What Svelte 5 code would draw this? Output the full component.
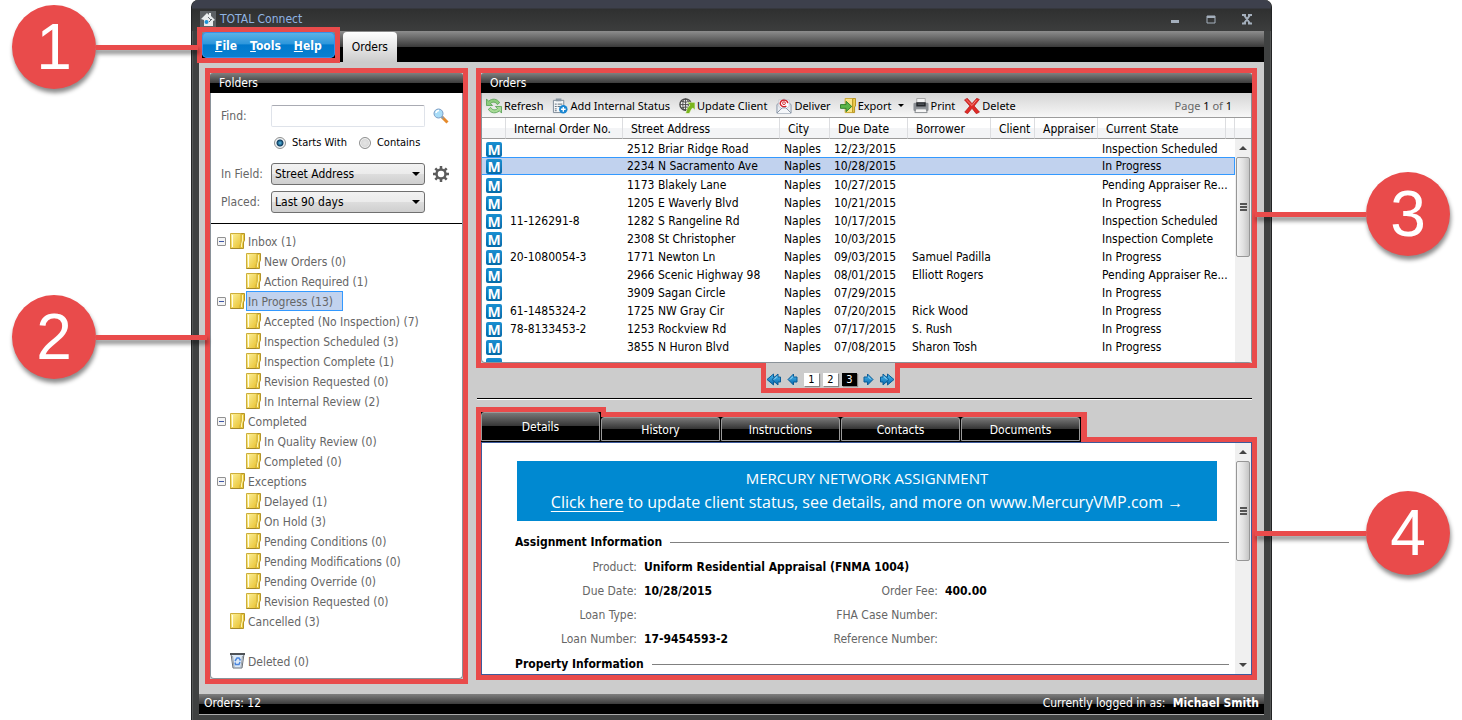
<script>
	let field = 'Street Address';
	let placed = 'Last 90 days';
	let match = 'starts';
	let find = '';
	let selectedFolder = 'In Progress (13)';
	let selectedOrder = 1;
	let currentPage = 3;
	let currentTab = 'Details';

	const folders = [
		{ name: 'Inbox (1)', children: ['New Orders (0)', 'Action Required (1)'] },
		{
			name: 'In Progress (13)',
			children: [
				'Accepted (No Inspection) (7)',
				'Inspection Scheduled (3)',
				'Inspection Complete (1)',
				'Revision Requested (0)',
				'In Internal Review (2)'
			]
		},
		{ name: 'Completed', children: ['In Quality Review (0)', 'Completed (0)'] },
		{
			name: 'Exceptions',
			children: [
				'Delayed (1)',
				'On Hold (3)',
				'Pending Conditions (0)',
				'Pending Modifications (0)',
				'Pending Override (0)',
				'Revision Requested (0)'
			]
		},
		{ name: 'Cancelled (3)', children: [] }
	];

	const tools = ['Refresh', 'Add Internal Status', 'Update Client', 'Deliver', 'Export', 'Print', 'Delete'];

	const columns = ['', 'Internal Order No.', 'Street Address', 'City', 'Due Date', 'Borrower', 'Client', 'Appraiser', 'Current State', ''];

	const orders = [
		{ no: '', street: '2512 Briar Ridge Road', due: '12/23/2015', borrower: '', state: 'Inspection Scheduled' },
		{ no: '', street: '2234 N Sacramento Ave', due: '10/28/2015', borrower: '', state: 'In Progress' },
		{ no: '', street: '1173 Blakely Lane', due: '10/27/2015', borrower: '', state: 'Pending Appraiser Re...' },
		{ no: '', street: '1205 E Waverly Blvd', due: '10/21/2015', borrower: '', state: 'In Progress' },
		{ no: '11-126291-8', street: '1282 S Rangeline Rd', due: '10/17/2015', borrower: '', state: 'Inspection Scheduled' },
		{ no: '', street: '2308 St Christopher', due: '10/03/2015', borrower: '', state: 'Inspection Complete' },
		{ no: '20-1080054-3', street: '1771 Newton Ln', due: '09/03/2015', borrower: 'Samuel Padilla', state: 'In Progress' },
		{ no: '', street: '2966 Scenic Highway 98', due: '08/01/2015', borrower: 'Elliott Rogers', state: 'Pending Appraiser Re...' },
		{ no: '', street: '3909 Sagan Circle', due: '07/29/2015', borrower: '', state: 'In Progress' },
		{ no: '61-1485324-2', street: '1725 NW Gray Cir', due: '07/20/2015', borrower: 'Rick Wood', state: 'In Progress' },
		{ no: '78-8133453-2', street: '1253 Rockview Rd', due: '07/17/2015', borrower: 'S. Rush', state: 'In Progress' },
		{ no: '', street: '3855 N Huron Blvd', due: '07/08/2015', borrower: 'Sharon Tosh', state: 'In Progress' }
	];

	const tabs = ['Details', 'History', 'Instructions', 'Contacts', 'Documents'];
</script>

{#snippet folderIcon()}
	<svg class="folder-icon" width="16" height="16" viewBox="0 0 16 16" aria-hidden="true">
		<defs>
			<linearGradient id="gold" x1="0" y1="0" x2="1" y2="1">
				<stop offset="0" stop-color="#fdf3a0" />
				<stop offset="1" stop-color="#e8c02c" />
			</linearGradient>
		</defs>
		<path d="M9 .5h5.500v7l-1 1.500v6.500H9z" fill="#ecca3c" stroke="#b3942a" />
		<path d="M.5.5h10.500v10l-1 1.500v3.500H.5z" fill="url(#gold)" stroke="#cdae3a" />
		<path d="M2.500 2v12" stroke="#fffde6" />
		<path d="M.5 15.500h10" stroke="#a3872a" />
		<path d="M12.500 2v6l-1 3v3" fill="none" stroke="#fdf3b0" />
	</svg>
{/snippet}

{#snippet scrollbar()}
	<div class="scrollbar" aria-hidden="true">
		<i class="up"></i>
		<div class="thumb"><i></i><i></i><i></i></div>
		<i class="down"></i>
	</div>
{/snippet}

{#snippet arrow(double, flip)}
	<svg class:flip width="15" height="13" viewBox="0 0 15 13" aria-hidden="true">
		<defs>
			<linearGradient id="blue" x1="0" y1="0" x2="0" y2="1">
				<stop offset="0" stop-color="#4fbdf0" />
				<stop offset="1" stop-color="#0464ad" />
			</linearGradient>
		</defs>
		{#if double}
			<path d="M5 4h2.500V1l6.500 5.500L7.500 12V9H5z" fill="url(#blue)" stroke="#0b5c97" />
			<path d="M.5 4H3V1l6 5.500L3 12V9H.5z" fill="url(#blue)" stroke="#0b5c97" />
			<path d="M4 3.500l3 3" stroke="#a9e0fa" />
		{:else}
			<path d="M3 4h3.500V1l5.500 5.500L6.500 12V9H3z" fill="url(#blue)" stroke="#0b5c97" />
			<path d="M7 3.500l3 3" stroke="#a9e0fa" />
		{/if}
	</svg>
{/snippet}

{#snippet toolIcon(name)}
	<svg width="16" height="16" viewBox="0 0 17 17" aria-hidden="true">
		{#if name === 'Refresh'}
			<path d="M.5 1v7h6.500L4.800 5.800C7 3.600 10.500 4 12 7l2.500-2C12 .6 6.500 0 2.800 3.400z" fill="#8ccb7c" stroke="#4c9a48" stroke-width=".8" />
			<path d="M16.500 16V9H10l2.200 2.200C10 13.400 6.500 13 5 10l-2.500 2c2.500 4.400 8 5 11.700 1.600z" fill="#a9dc98" stroke="#4c9a48" stroke-width=".8" />
		{:else if name === 'Add Internal Status'}
			<path d="M1.500 2.500h11v13h-11z" fill="#f5f7f9" stroke="#7a8794" />
			<path d="M4 .5h6v3H4z" fill="#8997a3" />
			<path d="M3 6.500h2M6 6.500h5M3 9h2M6 9h3M3 11.500h2M3 13.500h2" stroke="#5d6b78" />
			<circle cx="12" cy="12" r="4.500" fill="#1b87d2" />
			<path d="M9.500 12h5M12 9.500v5" stroke="#fff" stroke-width="1.500" />
		{:else if name === 'Update Client'}
			<circle cx="7" cy="7" r="6" fill="#f4f4f4" stroke="#4a4a4a" stroke-width="1.500" />
			<path d="M1 7h12M7 1v12M2.500 3.500q4.500 2 9 0M2.500 10.500q4.500-2 9 0" fill="none" stroke="#4a4a4a" />
			<ellipse cx="7" cy="7" rx="3" ry="6" fill="none" stroke="#4a4a4a" />
			<path d="M8.500 4.500H17V13l-2.500-2.500q-2 2-3.500 6H7q1-6 4.500-9z" fill="#7ab51d" stroke="#fff" stroke-width=".6" />
		{:else if name === 'Deliver'}
			<path d="M1 7l7.500-6L16 7v9H1z" fill="#e9edf2" stroke="#8592a3" />
			<path d="M3 2h11v7l-5.500 4L3 9z" fill="#fff" stroke="#c3c9d2" />
			<path d="M11 8.500a4 3.500 0 1 1 1.500-3" fill="none" stroke="#d2232a" stroke-width="1.500" />
			<ellipse cx="8.500" cy="5.500" rx="1.500" ry="1.500" fill="none" stroke="#d2232a" />
			<path d="M1 16l5.500-5.500h4L16 16" fill="#f4f6f9" stroke="#8592a3" />
		{:else if name === 'Export'}
			<path d="M5.500.5h8v15h-8z" fill="#fbe68a" stroke="#c9a52b" />
			<path d="M13.500.5h3v8l-1 1v6h-2z" fill="#efcf50" stroke="#b3901d" />
			<path d="M.5 7h6V3.500l6 5.500-6 5.500V11h-6z" fill="#5cb548" stroke="#2f7f2c" />
		{:else if name === 'Print'}
			<path d="M4 .5h9v6H4z" fill="#f3f3f3" stroke="#a5a5a5" />
			<rect x=".5" y="5" width="16" height="9" rx="1.500" fill="#8b8f94" />
			<path d="M3.500 4.500h10V9h-10z" fill="#24272b" />
			<path d="M3 11.500h11l1 4H2z" fill="#f5f5f5" stroke="#85898d" />
			<path d="M5 6.500h7" stroke="#6a6e73" />
		{:else}
			<path d="M.5 2L3.500.3 8.500 6l5-5.700 2.800 1.200-5.500 7 5.700 6.500-3.500 1.700L8.500 11 3.800 16.700.8 15l5.400-6.500z" fill="#df2a26" stroke="#b31515" stroke-width=".7" />
			<path d="M2.500 2l6 6L13.500 2" fill="none" stroke="#f58a80" />
		{/if}
	</svg>
{/snippet}

<div class="page">
	<div class="window">
		<header class="titlebar">
			<svg width="16" height="16" viewBox="0 0 16 16" aria-hidden="true">
				<rect width="16" height="16" fill="#5d6165" />
				<path d="M1 8l6-6 2 2V2h2v3l4 4-2 1v5H4v-6z" fill="#e9ecee" />
				<path d="M8 6l3 3M9 11l3-3" stroke="#636970" />
				<circle cx="6.500" cy="11" r="2" fill="#1a93d8" />
			</svg>
			<h1>TOTAL Connect</h1>
			<div class="window-buttons">
				<button aria-label="Minimize"><svg width="12" height="12" viewBox="0 0 12 12"><path d="M2 7h8v3H2z" fill="#a4afbc" /></svg></button>
				<button aria-label="Maximize"><svg width="12" height="12" viewBox="0 0 12 12"><path d="M2 3h8v7H2z" fill="none" stroke="#a4afbc" /><path d="M2 4h8" stroke="#a4afbc" stroke-width="2" /></svg></button>
				<button aria-label="Close"><svg width="12" height="12" viewBox="0 0 12 12"><path d="M1 2h4M7 2h4M1 10.500h4M7 10.500h4M3 2l6 8.500M9 2l-6 8.500" stroke="#a4afbc" stroke-width="2" /></svg></button>
			</div>
		</header>

		<div class="menubar">
			<nav class="menu marked">
				<button><u>F</u>ile</button>
				<button><u>T</u>ools</button>
				<button><u>H</u>elp</button>
				<div class="callout left one"><b>1</b><i></i></div>
			</nav>
			<button class="module">Orders</button>
		</div>

		<div class="content">
			<aside class="panel marked">
				<h2>Folders</h2>
				<form class="search">
					<label for="find">Find:</label>
					<input id="find" class="find" type="text" bind:value={find}>
					<button type="button" aria-label="Search">
						<svg width="16" height="16" viewBox="0 0 16 16">
							<path d="M9 9l5.500 5.500" stroke="#e58a2b" stroke-width="3" />
							<path d="M8.500 8.500l2 2" stroke="#8d99a8" stroke-width="2" />
							<circle cx="5.500" cy="5.500" r="4.500" fill="#a8dcf7" stroke="#7b9cc4" />
							<path d="M3 5a3 3 0 0 1 3-2.500" fill="none" stroke="#fff" stroke-width="1.500" />
						</svg>
					</button>
					<div class="radios">
						<label><input type="radio" name="match" value="starts" bind:group={match}>Starts With</label>
						<label><input type="radio" name="match" value="contains" bind:group={match}>Contains</label>
					</div>
					<label for="field">In Field:</label>
					<div class="select">
						<select id="field" bind:value={field}><option>Street Address</option></select>
					</div>
					<button type="button" aria-label="Settings">
						<svg width="16" height="16" viewBox="0 0 16 16">
							<circle cx="8" cy="8" r="4.500" fill="none" stroke="#5b5b5b" stroke-width="2.500" />
							<path d="M8 0v3M8 13v3M0 8h3M13 8h3M2.300 2.300l2 2M11.700 11.700l2 2M13.700 2.300l-2 2M4.300 11.700l-2 2" stroke="#5b5b5b" stroke-width="2.500" />
						</svg>
					</button>
					<label for="placed">Placed:</label>
					<div class="select">
						<select id="placed" bind:value={placed}><option>Last 90 days</option></select>
					</div>
				</form>

				<ul class="tree">
					{#each folders as folder}
						<li>
							<div class="node">
								{#if folder.children.length}
									<button class="toggle" aria-label="Collapse {folder.name}"></button>
								{:else}
									<span class="no-toggle"></span>
								{/if}
								{@render folderIcon()}
								<button class="name" class:selected={selectedFolder === folder.name} on:click={() => selectedFolder = folder.name}>{folder.name}</button>
							</div>
							{#if folder.children.length}
								<ul>
									{#each folder.children as child}
										<li class="node">
											{@render folderIcon()}
											<button class="name">{child}</button>
										</li>
									{/each}
								</ul>
							{/if}
						</li>
					{/each}
					<li class="node deleted">
						<span class="no-toggle"></span>
						<svg width="16" height="16" viewBox="0 0 16 16" aria-hidden="true">
							<path d="M1 1h13l-2 14H3z" fill="#dce9f7" stroke="#6d7278" />
							<path d="M0 1h15" stroke="#4e5257" stroke-width="2" />
							<path d="M2.500 3l1.500 11M12.500 3L11 14" stroke="#9da3aa" />
							<path d="M5 8l2-3h2l1.500 2.500M10 9l-1 2.500H5.500L5 9.500" fill="none" stroke="#4c86dd" stroke-width="1.500" />
						</svg>
						<button class="name">Deleted (0)</button>
					</li>
				</ul>
				<div class="callout left two"><b>2</b><i></i></div>
			</aside>

			<main>
				<section class="panel marked">
					<h2>Orders</h2>
					<div class="toolbar">
						{#each tools as tool}
							<button>
								{@render toolIcon(tool)}{tool}
								{#if tool === 'Export'}<i class="caret"></i>{/if}
							</button>
						{/each}
						<p>Page <b>1</b> of <b>1</b></p>
					</div>
					<div class="orders">
						<table>
							<colgroup>
								{#each columns as column, i}
									<col class="col-{i}">
								{/each}
							</colgroup>
							<thead>
								<tr>
									{#each columns as column}
										<th>{column}</th>
									{/each}
								</tr>
							</thead>
							<tbody>
								{#each orders as order, i}
									<tr class:selected={selectedOrder === i} on:click={() => selectedOrder = i}>
										<td><span class="mercury">M</span></td>
										<td>{order.no}</td>
										<td>{order.street}</td>
										<td>Naples</td>
										<td>{order.due}</td>
										<td>{order.borrower}</td>
										<td></td>
										<td></td>
										<td colspan="2">{order.state}</td>
									</tr>
								{/each}
								<tr>
									<td><span class="mercury"></span></td>
									<td colspan="9"></td>
								</tr>
							</tbody>
						</table>
						<div class="side">
							<div class="side-head"></div>
							{@render scrollbar()}
						</div>
					</div>
					<div class="callout right three"><i></i><b>3</b></div>
				</section>

				<nav class="pager">
					<button aria-label="First page">{@render arrow(true, true)}</button>
					<button aria-label="Previous page">{@render arrow(false, true)}</button>
					{#each [1, 2, 3] as page}
						<button class="number" class:current={currentPage === page} on:click={() => currentPage = page}>{page}</button>
					{/each}
					<button aria-label="Next page">{@render arrow(false, false)}</button>
					<button aria-label="Last page">{@render arrow(true, false)}</button>
				</nav>

				<hr>

				<div class="tabs">
					{#each tabs as tab}
						<button class:current={currentTab === tab} on:click={() => currentTab = tab}><span>{tab}</span></button>
					{/each}
				</div>

				<section class="details marked">
					<div class="details-body">
						<div class="banner">
							<p>MERCURY NETWORK ASSIGNMENT</p>
							<p class="update"><a href="#update">Click here</a> to update client status, see details, and more on www.MercuryVMP.com →</p>
						</div>
						<h3>Assignment Information</h3>
						<dl>
							<dt>Product:</dt>
							<dd class="wide">Uniform Residential Appraisal (FNMA 1004)</dd>
							<dt>Due Date:</dt>
							<dd>10/28/2015</dd>
							<dt>Order Fee:</dt>
							<dd>400.00</dd>
							<dt>Loan Type:</dt>
							<dd></dd>
							<dt>FHA Case Number:</dt>
							<dd></dd>
							<dt>Loan Number:</dt>
							<dd>17-9454593-2</dd>
							<dt>Reference Number:</dt>
							<dd></dd>
						</dl>
						<h3>Property Information</h3>
					</div>
					{@render scrollbar()}
					<div class="callout right four"><i></i><b>4</b></div>
				</section>
			</main>
		</div>

		<footer>
			<span>Orders: 12</span>
			<span>Currently logged in as: <b>Michael Smith</b></span>
		</footer>
	</div>
</div>

<style>
	:global(body) {
		background: #fff;
	}

	.page, .page * {
		box-sizing: border-box;
	}

	.page {
		color: #000;
		font-family: 'DejaVu Sans Condensed', 'Noto Sans', sans-serif;
		font-size: 12px;
		line-height: 18px;
		padding: 0 190px 0 191px;
	}

	button, input, select {
		color: inherit;
		font: inherit;
	}

	button {
		background: none;
		border: none;
		margin: 0;
		padding: 0;
		white-space: nowrap;
	}

	svg {
		display: block;
		flex: none;
	}

	h1, h2, h3, p, ul, dl, dd {
		font-weight: normal;
		margin: 0;
		padding: 0;
	}

	.window {
		background: #3f4141;
		border: 1px solid #222425;
		border-radius: 7px 7px 0 0;
		border-width: 0 1px;
		box-shadow: inset 0 0 0 1px #555757;
		display: flex;
		flex-direction: column;
		min-height: 100vh;
		padding: 0 7px 6px;
	}

	.titlebar {
		align-items: center;
		background: linear-gradient(#3d404c 0, #3d404c 8px, #2f3030 9px, #3c3d3d 100%);
		border-radius: 7px 7px 0 0;
		display: flex;
		gap: 4px;
		height: 31px;
		margin: 0 -7px;
		padding: 6px 18px 0 8px;
	}

	h1 {
		color: #8fb4e4;
		flex: 1;
		font-size: 12px;
	}

	.window-buttons {
		display: flex;
		gap: 24px;
	}

	.menubar {
		align-items: flex-end;
		background: linear-gradient(#8d8d8d, #3c3c3c 50%, #000 50%);
		display: flex;
		gap: 8px;
		height: 31px;
		padding-left: 3px;
	}

	.marked {
		position: relative;
	}

	/* square frame round the rounded panels */
	.marked::before {
		border: 5px solid #e94b4b;
		content: '';
		inset: -5px;
		pointer-events: none;
		position: absolute;
	}

	.menu {
		align-items: center;
		background: linear-gradient(#5fb4e8, #2e97dc 45%, #0079cd 50%, #0a80d0);
		border-radius: 5px;
		box-shadow: inset 0 0 0 1px #3a8fe8;
		color: #fff;
		display: flex;
		font-weight: bold;
		gap: 13px;
		height: 26px;
		margin-bottom: 4px;
		padding: 2px 13px 0;
	}

	.module {
		background: linear-gradient(#fff, #ccc);
		border-radius: 4px 4px 0 0;
		height: 30px;
		padding: 0 9px;
	}

	.callout {
		align-items: center;
		display: flex;
		filter: drop-shadow(1px 4px 2px rgba(0, 0, 0, .45));
		pointer-events: none;
		position: absolute;
		z-index: 3;
	}

	.callout b {
		align-items: center;
		background: #e94b4b;
		border-radius: 50%;
		color: #fff;
		display: flex;
		font-family: 'Liberation Sans', sans-serif;
		font-size: 64px;
		font-weight: normal;
		height: 84px;
		justify-content: center;
		line-height: 64px;
		width: 84px;
	}

	.callout i {
		background: #e94b4b;
		height: 5px;
		width: 111px;
	}

	.left {
		right: calc(100% + 4px);
	}

	.right {
		left: calc(100% + 4px);
	}

	.one {
		top: -27px;
	}

	.one i {
		width: 102px;
	}

	.two {
		top: 222px;
	}

	.three {
		top: 99px;
	}

	.four {
		top: 48px;
	}

	.content {
		background: #ccc;
		display: flex;
		flex: 1;
		gap: 18px;
		padding: 11px 12px 15px 11px;
	}

	.panel {
		background: #fff;
		border: 1px solid #8a9299;
		border-radius: 4px;
		border-top: none;
	}

	.panel::before {
		inset: -5px -6px -6px;
	}

	aside {
		flex: none;
		width: 253px;
	}

	main {
		flex: 1;
		min-width: 0;
	}

	h2 {
		background: linear-gradient(#7f7f7f, #3c3c3c 50%, #000 50%);
		border-radius: 3px 3px 0 0;
		color: #fff;
		font-size: 12px;
		height: 20px;
		margin: 0 -1px;
		padding: 1px 9px;
	}

	.search {
		align-items: center;
		border-bottom: 1px solid #000;
		color: #666;
		display: grid;
		gap: 6px 0;
		grid-template-columns: 50px 154px 24px;
		grid-template-rows: 22px 24px 22px 22px;
		justify-items: start;
		padding: 12px 10px 10px;
	}

	.search > button {
		justify-self: end;
	}

	.find {
		background: #fff;
		border: 1px solid #dfe3ea;
		border-radius: 2px;
		border-top-color: #a9abb3;
		height: 22px;
		padding: 0 4px;
		width: 100%;
	}

	.radios {
		align-self: start;
		color: #000;
		display: flex;
		font-size: 11px;
		gap: 12px;
		grid-column: 2 / 4;
		padding-left: 3px;
		white-space: nowrap;
	}

	.radios label {
		align-items: center;
		display: flex;
		gap: 6px;
		height: 20px;
	}

	.radios input {
		appearance: none;
		background: radial-gradient(#e4e4e4, #cfcfcf);
		border: 1px solid #8e8f8f;
		border-radius: 50%;
		box-shadow: inset 0 0 0 1px #f4f4f4;
		flex: none;
		height: 12px;
		margin: 0;
		width: 12px;
	}

	.radios input:checked {
		background: radial-gradient(circle, #57c0ec 0, #0d3b5e 3px, #e8eef2 4px);
	}

	.select {
		position: relative;
		width: 100%;
	}

	.select::after {
		border: 4px solid transparent;
		border-bottom: none;
		border-top-color: #000;
		content: '';
		pointer-events: none;
		position: absolute;
		right: 5px;
		top: 9px;
	}

	select {
		appearance: none;
		background: linear-gradient(#f2f2f2, #ebebeb 50%, #ddd 50%, #cfcfcf);
		border: 1px solid #707070;
		border-radius: 3px;
		color: #000;
		display: block;
		height: 22px;
		padding: 0 3px;
		width: 100%;
	}

	.tree {
		color: #666;
		padding: 7px 6px;
	}

	ul {
		list-style: none;
	}

	.tree ul {
		padding-left: 29px;
	}

	.node {
		align-items: center;
		display: flex;
		height: 20px;
	}

	.toggle, .no-toggle {
		flex: none;
		height: 9px;
		margin-right: 4px;
		width: 9px;
	}

	.toggle {
		background: linear-gradient(#3d56a5, #3d56a5) center / 5px 1px no-repeat #f4f4f4;
		border: 1px solid #919191;
		border-radius: 1px;
	}

	.name {
		border: 1px solid transparent;
		height: 20px;
		padding: 1px 1px 0;
	}

	.name.selected {
		background: #c1d2ee;
		border-color: #3399ff;
		padding-right: 9px;
	}

	.deleted {
		margin-top: 20px;
	}

	.toolbar {
		align-items: center;
		background: linear-gradient(#d5d5d5, #f7f7f7);
		border-bottom: 1px solid #9c9c9c;
		display: flex;
		font-family: 'Noto Sans', sans-serif;
		font-size: 11px;
		gap: 9px;
		height: 25px;
		padding: 1px 19px 0 4px;
	}

	.toolbar button {
		align-items: center;
		display: flex;
		gap: 2px;
	}

	.toolbar p {
		color: #666;
		margin-left: auto;
	}

	.toolbar p b {
		color: #000;
		font-weight: normal;
	}

	.caret {
		border: 3px solid transparent;
		border-bottom: none;
		border-top-color: #000;
		margin-left: 4px;
	}

	.orders {
		display: flex;
		height: 244px;
		overflow: hidden;
	}

	table {
		border-collapse: separate;
		border-spacing: 0;
		flex: 1;
		height: max-content;
		min-width: 0;
		table-layout: fixed;
	}

	th {
		background: linear-gradient(#fff 50%, #f3f4f6 50%);
		border-bottom: 1px solid #9c9c9c;
		border-right: 1px solid #dcdde0;
		font-weight: normal;
		height: 21px;
		line-height: 18px;
		padding: 1px 0 0 8px;
		text-align: left;
		white-space: nowrap;
	}

	td {
		height: 18px;
		line-height: 16px;
		overflow: hidden;
		padding: 2px 0 0 4px;
		white-space: nowrap;
	}

	td:first-child {
		padding-left: 4px;
	}

	.selected td {
		background: #c1d2ee;
		border: 1px solid #3399ff;
		border-width: 1px 0;
		padding-bottom: 0;
		padding-top: 1px;
		line-height: 15px;
	}

	.selected td:last-child {
		border-right-width: 1px;
	}

	.col-0 {
		width: 24px;
	}

	.col-1 {
		width: 117px;
	}

	.col-2 {
		width: 157px;
	}

	.col-3 {
		width: 50px;
	}

	.col-4 {
		width: 78px;
	}

	.col-5 {
		width: 83px;
	}

	.col-6 {
		width: 44px;
	}

	.col-7 {
		width: 63px;
	}

	.col-8 {
		width: auto;
	}

	.col-9 {
		width: 5px;
	}

	.mercury {
		background: linear-gradient(#1a8fd1, #046aa8);
		border-radius: 2px;
		color: #fff;
		display: block;
		font-family: 'Open Sans', sans-serif;
		font-size: 14px;
		font-weight: bold;
		height: 15px;
		line-height: 15px;
		text-align: center;
		width: 16px;
	}

	.side {
		display: flex;
		flex: none;
		flex-direction: column;
		width: 16px;
	}

	.side-head {
		background: linear-gradient(#fff 50%, #f3f4f6 50%);
		border-bottom: 1px solid #9c9c9c;
		height: 21px;
	}

	.scrollbar {
		align-items: center;
		background: #f0f0f0;
		display: flex;
		flex: 1;
		flex-direction: column;
		flex-shrink: 0;
		gap: 7px;
		padding: 7px 0;
	}

	.up {
		border: 4px solid transparent;
		border-bottom-color: #444;
		border-top: none;
	}

	.down {
		border: 4px solid transparent;
		border-bottom: none;
		border-top-color: #444;
		margin-top: auto;
	}

	.orders .down {
		display: none;
	}

	.thumb {
		align-items: center;
		background: linear-gradient(90deg, #f4f4f4, #e2e2e2 50%, #c6c6c6);
		border: 1px solid #979797;
		border-radius: 2px;
		display: flex;
		flex-direction: column;
		gap: 1px;
		height: 100px;
		justify-content: center;
		width: 14px;
	}

	.thumb i {
		background: #555;
		height: 2px;
		width: 7px;
	}

	.pager {
		align-items: center;
		background: #ccc;
		border: 5px solid #e94b4b;
		border-top: none;
		display: flex;
		gap: 4px;
		height: 30px;
		justify-content: center;
		margin-left: 280px;
		padding-top: 7px;
		position: relative;
		width: 139px;
		z-index: 1;
	}

	.flip {
		transform: scaleX(-1);
	}

	.number {
		background: #fff;
		box-shadow: 1px 1px 1px #888;
		font-size: 11px;
		height: 13px;
		line-height: 13px;
		width: 15px;
	}

	.number.current {
		background: #000;
		color: #fff;
	}

	hr {
		background: #000;
		border: none;
		border-bottom: 1px solid #fff;
		height: 2px;
		margin: 5px 0 12px -4px;
	}

	.tabs {
		align-items: flex-end;
		display: flex;
		height: 30px;
		position: relative;
		width: max-content;
		z-index: 1;
	}

	.tabs button {
		background: #000;
		box-shadow: 0 -5px #e94b4b;
		color: #fff;
		height: 25px;
		padding: 0 1px 1px 0;
		width: 120px;
	}

	.tabs button.current {
		box-shadow: -5px -5px #e94b4b, 5px -5px #e94b4b;
		height: 30px;
	}

	.tabs button:last-child {
		box-shadow: 0 -5px #e94b4b, 6px -5px #e94b4b;
	}

	.tabs span {
		align-items: center;
		background: linear-gradient(#777, #333 50%, #000 50%);
		border: 1px solid #9a9a9a;
		border-radius: 3px 3px 0 0;
		display: flex;
		height: 100%;
		justify-content: center;
		padding-top: 1px;
	}

	.details {
		background: #fff;
		border: 1px solid #3d5a9c;
		display: flex;
		height: 233px;
	}

	.details::before {
		inset: -6px;
	}

	.details-body {
		flex: 1;
		overflow: hidden;
		padding: 18px 6px 0 33px;
	}

	.details .scrollbar {
		flex: none;
		width: 16px;
	}

	.banner {
		background: #0089d1;
		color: #fff;
		font-family: 'Open Sans', sans-serif;
		font-size: 15px;
		font-weight: 300;
		height: 60px;
		line-height: 24px;
		margin: 0 12px 12px 2px;
		padding: 5px 0;
		text-align: center;
		white-space: nowrap;
	}

	.update {
		font-size: 16px;
	}

	.banner a {
		color: #fff;
		text-underline-offset: 3px;
	}

	h3 {
		align-items: center;
		display: flex;
		font-size: 12px;
		font-weight: bold;
		gap: 8px;
	}

	h3::after {
		background: #808080;
		content: '';
		flex: 1;
		height: 1px;
	}

	dl {
		display: grid;
		gap: 0 7px;
		grid-template-columns: 122px 172px 115px 1fr;
		line-height: 24px;
		padding: 4px 0;
	}

	dt {
		color: #666;
		text-align: right;
		white-space: nowrap;
	}

	dd {
		font-weight: bold;
	}

	.wide {
		grid-column: 2 / 5;
	}

	footer {
		background: linear-gradient(#7f7f7f, #3c3c3c 50%, #000 50%);
		border-bottom: 1px solid #aaa;
		color: #fff;
		display: flex;
		height: 21px;
		justify-content: space-between;
		padding: 0 5px;
	}

	footer b {
		margin-left: 4px;
	}
</style>
